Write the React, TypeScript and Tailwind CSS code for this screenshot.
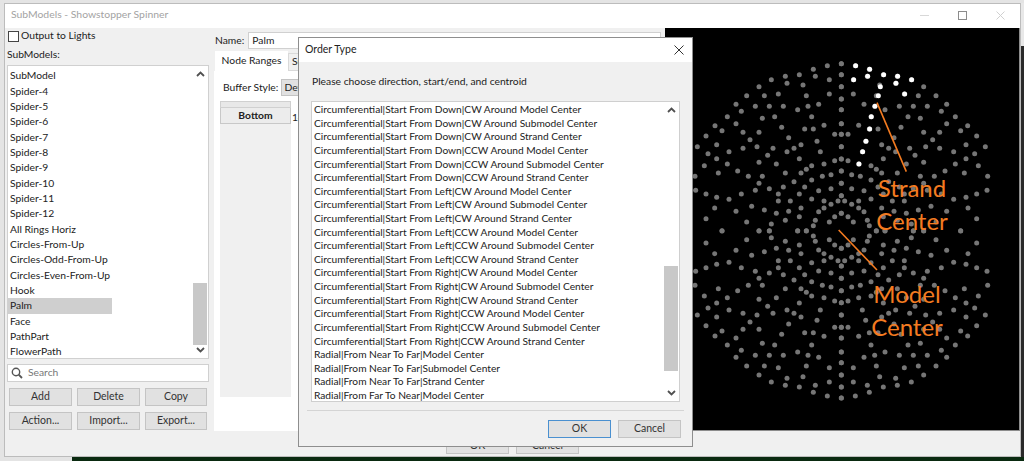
const submodels = [
  'SubModel', 'Spider-4', 'Spider-5', 'Spider-6', 'Spider-7', 'Spider-8', 'Spider-9', 'Spider-10',
  'Spider-11', 'Spider-12', 'All Rings Horiz', 'Circles-From-Up', 'Circles-Odd-From-Up',
  'Circles-Even-From-Up', 'Hook', 'Palm', 'Face', 'PathPart', 'FlowerPath',
]

const orderTypes: string[] = []
for (const dir of ['Down', 'Left', 'Right']) {
  for (const spin of ['CW', 'CCW']) {
    for (const center of ['Model', 'Submodel', 'Strand']) {
      orderTypes.push(`Circumferential|Start From ${dir}|${spin} Around ${center} Center`)
    }
  }
}
orderTypes.push(
  'Radial|From Near To Far|Model Center',
  'Radial|From Near To Far|Submodel Center',
  'Radial|From Near To Far|Strand Center',
  'Radial|From Far To Near|Model Center',
)

// one quadrant of the spinner, the rest is mirrored
const quadrant: [number, number][] = [
  [451, 191], [409, 197], [367, 208], [325, 224], [283, 229], [241, 239], [204, 260], [167, 287],
  [135, 313], [109, 350], [72, 377], [45, 408], [19, 440], [51, 461], [40, 497], [12, 529],
  [14, 571], [45, 582], [451, 224], [415, 239], [373, 229], [336, 255], [288, 250], [262, 282],
  [220, 287], [346, 287], [415, 282], [451, 260], [451, 297], [383, 313], [351, 319], [320, 329],
  [277, 319], [235, 319], [193, 319], [151, 334], [135, 371], [93, 392], [77, 434], [114, 455],
  [77, 476], [109, 492], [82, 519], [140, 513], [172, 529], [214, 529], [204, 550], [193, 571],
  [151, 582], [114, 598], [77, 592], [71, 624], [135, 634], [182, 619], [220, 630], [262, 603],
  [298, 603], [262, 582], [277, 561], [235, 566], [309, 545], [362, 540], [341, 561], [325, 582],
  [362, 597], [330, 624], [293, 634], [256, 640], [399, 603], [420, 613], [383, 572], [420, 566],
  [451, 550], [451, 513], [420, 524], [394, 529], [399, 492], [431, 482], [451, 477], [362, 497],
  [346, 508], [330, 519], [283, 519], [256, 492], [204, 487], [230, 466], [246, 445], [198, 440],
  [156, 445], [177, 419], [204, 397], [156, 397], [293, 413], [272, 382], [214, 355], [251, 350],
  [362, 350], [341, 387], [367, 387], [399, 376], [451, 371], [451, 329], [431, 403], [451, 403],
  [378, 424], [330, 434], [309, 445], [288, 455], [388, 455], [451, 440], [325, 476], [441, 603],
  [451, 587], [451, 640], [45, 656], [167, 666], [241, 672], [283, 661], [325, 650], [373, 661],
  [383, 635], [399, 624], [431, 650], [415, 666], [367, 677], [93, 692], [204, 692], [235, 692],
  [320, 692], [346, 692],
]

const strand: [number, number][] = [
  [494, 197], [536, 208], [578, 224], [620, 229], [662, 239], [488, 239], [530, 229], [568, 260],
  [615, 250], [641, 282], [562, 287], [552, 319], [541, 350], [536, 387], [525, 424], [515, 455],
  [504, 492],
]

// zoom coordinates (3x, origin at x=690) to canvas coordinates (origin at 664,28)
const cx = (x: number) => 690 + x / 3 - 664
const cy = (y: number) => y / 3 - 28

function Spinner() {
  return (
    <svg width="354" height="403" viewBox="0 0 354 403" className="block">
      {quadrant.flatMap(([x, y], i) => [
        [x, y], [902 - x, y], [x, 1385 - y], [902 - x, 1385 - y],
      ].map(([px, py], j) => (
        <circle key={`${i}-${j}`} cx={cx(px)} cy={cy(py)} r="2.5" fill="#767676" />
      )))}
      {strand.map(([x, y]) => (
        <circle key={`${x}-${y}`} cx={cx(x)} cy={cy(y)} r="2.5" fill="#ffffff" />
      ))}
      <line x1={cx(558)} y1={cy(308)} x2={cx(646)} y2={cy(515)} stroke="#f47b20" strokeWidth="1.6" />
      <line x1={cx(443)} y1={cy(690)} x2={cx(558)} y2={cy(810)} stroke="#f47b20" strokeWidth="1.6" />
    </svg>
  )
}

function Chevron({ down = false }: { down?: boolean }) {
  return (
    <svg width="9" height="6" viewBox="0 0 9 6" className="block">
      <path d={down ? 'M1 1 L4.5 4.5 L8 1' : 'M1 5 L4.5 1.5 L8 5'} fill="none" stroke="#505050" strokeWidth="1.8" />
    </svg>
  )
}

function Btn({ label, className = 'border-[#c4c4c4]' }: { label: string; className?: string }) {
  return (
    <div className={`flex items-center justify-center bg-[#e1e1e1] border text-[10.5px] text-[#333] ${className}`}>
      {label}
    </div>
  )
}

export default function App() {
  return (
    <div className="relative w-[1024px] h-[461px] overflow-hidden bg-[#e4e4e4] font-['Lato',sans-serif]">
      <div className="flex h-[457px] pt-[3px]">
        <div className="w-[4px] shrink-0" />

        {/* main window */}
        <div className="w-[1017px] shrink-0 flex flex-col bg-[#f0f0f0] border border-[#bcbcbc]">
          <div className="h-[24px] shrink-0 bg-white flex items-center pl-[6px] pr-[15px] pb-[2px] text-[10.4px] text-[#a3a3a3]">
            <span className="flex-1">SubModels - Showstopper Spinner</span>
            <div className="flex items-center gap-[29px]">
              <div className="w-[9px] h-px bg-[#d8d8d8]" />
              <div className="w-[9px] h-[9px] border border-[#8c8c8c]" />
              <svg width="9" height="9" viewBox="0 0 9 9"><path d="M0.5 0.5 L8.5 8.5 M8.5 0.5 L0.5 8.5" stroke="#d0d0d0" fill="none" /></svg>
            </div>
          </div>

          <div className="h-[403px] shrink-0 flex">
            {/* left column */}
            <div className="w-[208px] shrink-0 pl-[2px] pr-[4px] flex flex-col text-[10.3px] text-[#222]">
              <div className="h-[16px] flex items-center gap-[2px] pl-[1px]">
                <div className="w-[11px] h-[11px] bg-white border border-[#444]" />
                <span>Output to Lights</span>
              </div>
              <div className="mt-[3px] h-[15px] flex items-center">SubModels:</div>
              <div className="mt-[3px] h-[294px] shrink-0 flex bg-white border border-[#d0d0d0]">
                <div className="flex-1 pt-[2.5px]">
                  {submodels.map((name) => (
                    <div
                      key={name}
                      className={`w-[104px] h-[15.33px] pl-[2px] flex items-center whitespace-nowrap ${name === 'Palm' ? 'bg-[#cfcfcf]' : ''}`}
                    >
                      {name}
                    </div>
                  ))}
                </div>
                <div className="w-[14px] mr-px flex flex-col items-center justify-between py-[5px] relative">
                  <Chevron />
                  <div className="absolute left-0 right-0 top-[217px] h-[62px] bg-[#c8c8c8]" />
                  <Chevron down />
                </div>
              </div>
              <div className="mt-[5px] h-[18px] shrink-0 flex items-center gap-[5px] pl-[3px] bg-white border border-[#d0d0d0] text-[#777]">
                <svg width="12" height="12" viewBox="0 0 12 12" className="shrink-0">
                  <circle cx="5" cy="5" r="3.7" fill="none" stroke="#555" strokeWidth="1.4" />
                  <path d="M7.7 7.7 L11 11" stroke="#555" strokeWidth="1.8" />
                </svg>
                Search
              </div>
              <div className="mt-[6px] pl-[2px] grid grid-cols-[63px_63px_62px] gap-x-[5px] gap-y-[6px]">
                {['Add', 'Delete', 'Copy', 'Action...', 'Import...', 'Export...'].map((label) => (
                  <Btn key={label} label={label} className="h-[18px] border-[#c4c4c4]" />
                ))}
              </div>
            </div>

            {/* middle panel */}
            <div className="flex-1 min-w-0 pl-px pr-[4px] flex flex-col text-[10.3px] text-[#222]">
              <div className="h-[23px] flex items-center gap-[4px] pl-[1px] pt-[2px] shrink-0">
                <span>Name:</span>
                <div className="flex-1 h-[17px] pl-[3px] bg-white border border-[#d0d0d0] flex items-center">Palm</div>
              </div>
              <div className="flex h-[20px] shrink-0 pl-px items-end">
                <div className="w-[73px] h-[20px] bg-white flex items-center justify-center">Node Ranges</div>
                <div className="w-[50px] h-[18px] pl-[3px] flex items-center bg-[#f0f0f0] border border-[#d9d9d9]">Su</div>
              </div>
              <div className="flex-1 bg-white pl-[6px] pr-2 flex flex-col">
                <div className="h-[30px] pt-[3px] flex items-center gap-[3px] pl-[3px] shrink-0">
                  <span>Buffer Style:</span>
                  <div className="w-[120px] h-[17px] pl-[2px] bg-[#e1e1e1] border border-[#c4c4c4] flex items-center">Def</div>
                </div>
                <div className="h-[296px] flex">
                  <div className="w-[71px] bg-[#f0f0f0] flex flex-col">
                    <div className="h-[7px] bg-[#e8e8e8] border border-[#d0d0d0]" />
                    <div className="h-[16px] bg-[#ececec] border-x border-b border-[#c8c8c8] flex items-center justify-center font-bold">Bottom</div>
                  </div>
                  <div className="pl-[1px] pt-[9px] h-[24px]">14</div>
                </div>
              </div>
            </div>

            {/* preview */}
            <div className="relative w-[355px] shrink-0 bg-black border-r border-b border-[#8c8c8c]">
              <Spinner />
              <div className="absolute left-[202px] top-[143px] w-[90px] text-center text-[24px] leading-[33px] text-[#f47b20]">Strand<br />Center</div>
              <div className="absolute left-[197px] top-[249px] w-[90px] text-center text-[24px] leading-[33px] text-[#f47b20]">Model<br />Center</div>
            </div>
          </div>

          <div className="flex-1 flex justify-center gap-[7px] pt-[6px]">
            <Btn label="OK" className="w-[63px] h-[17px] border-[#c4c4c4]" />
            <Btn label="Cancel" className="w-[63px] h-[17px] border-[#c4c4c4]" />
          </div>
        </div>

        <div className="w-[3px] shrink-0 flex flex-col">
          <div className="h-[43px] bg-[#e8e8e8]" />
          <div className="flex-1 bg-[#2a2a2a]" />
        </div>
      </div>

      <div className="h-[4px] ml-[72px] bg-[#0a2a10]" />

      {/* Order Type dialog */}
      <div className="absolute left-[298px] top-[37px] w-[395px] h-[410px] flex flex-col bg-[#f0f0f0] border border-[#8e8e8e] text-[#222]">
        <div className="h-[24px] shrink-0 bg-white flex items-center justify-between pl-[6px] pr-[8px] text-[10.5px]">
          <span>Order Type</span>
          <svg width="10" height="10" viewBox="0 0 10 10"><path d="M0.5 0.5 L9.5 9.5 M9.5 0.5 L0.5 9.5" stroke="#333" fill="none" /></svg>
        </div>
        <div className="h-[39px] shrink-0 pl-[13px] flex items-center text-[10.3px]">Please choose direction, start/end, and centroid</div>
        <div className="mx-[12px] h-[301px] shrink-0 flex bg-white border border-[#cfcfcf] overflow-hidden">
          <div className="flex-1 pl-[2px] pt-px text-[10.2px]">
            {orderTypes.map((t) => (
              <div key={t} className="h-[13.62px] flex items-center whitespace-nowrap">{t}</div>
            ))}
          </div>
          <div className="relative w-[14px] mr-px flex flex-col items-center justify-between py-[5px]">
            <Chevron />
            <div className="absolute left-0 right-0 top-[164px] h-[105px] bg-[#c8c8c8]" />
            <Chevron down />
          </div>
        </div>
        <div className="mx-[8px] mt-[8px] h-px shrink-0 bg-[#d4d4d4]" />
        <div className="flex justify-end gap-[7px] pr-[11px] pt-[9px]">
          <Btn label="OK" className="w-[63px] h-[18px] border-[#4a90d0]" />
          <Btn label="Cancel" className="w-[63px] h-[18px] border-[#c4c4c4]" />
        </div>
      </div>
    </div>
  )
}
